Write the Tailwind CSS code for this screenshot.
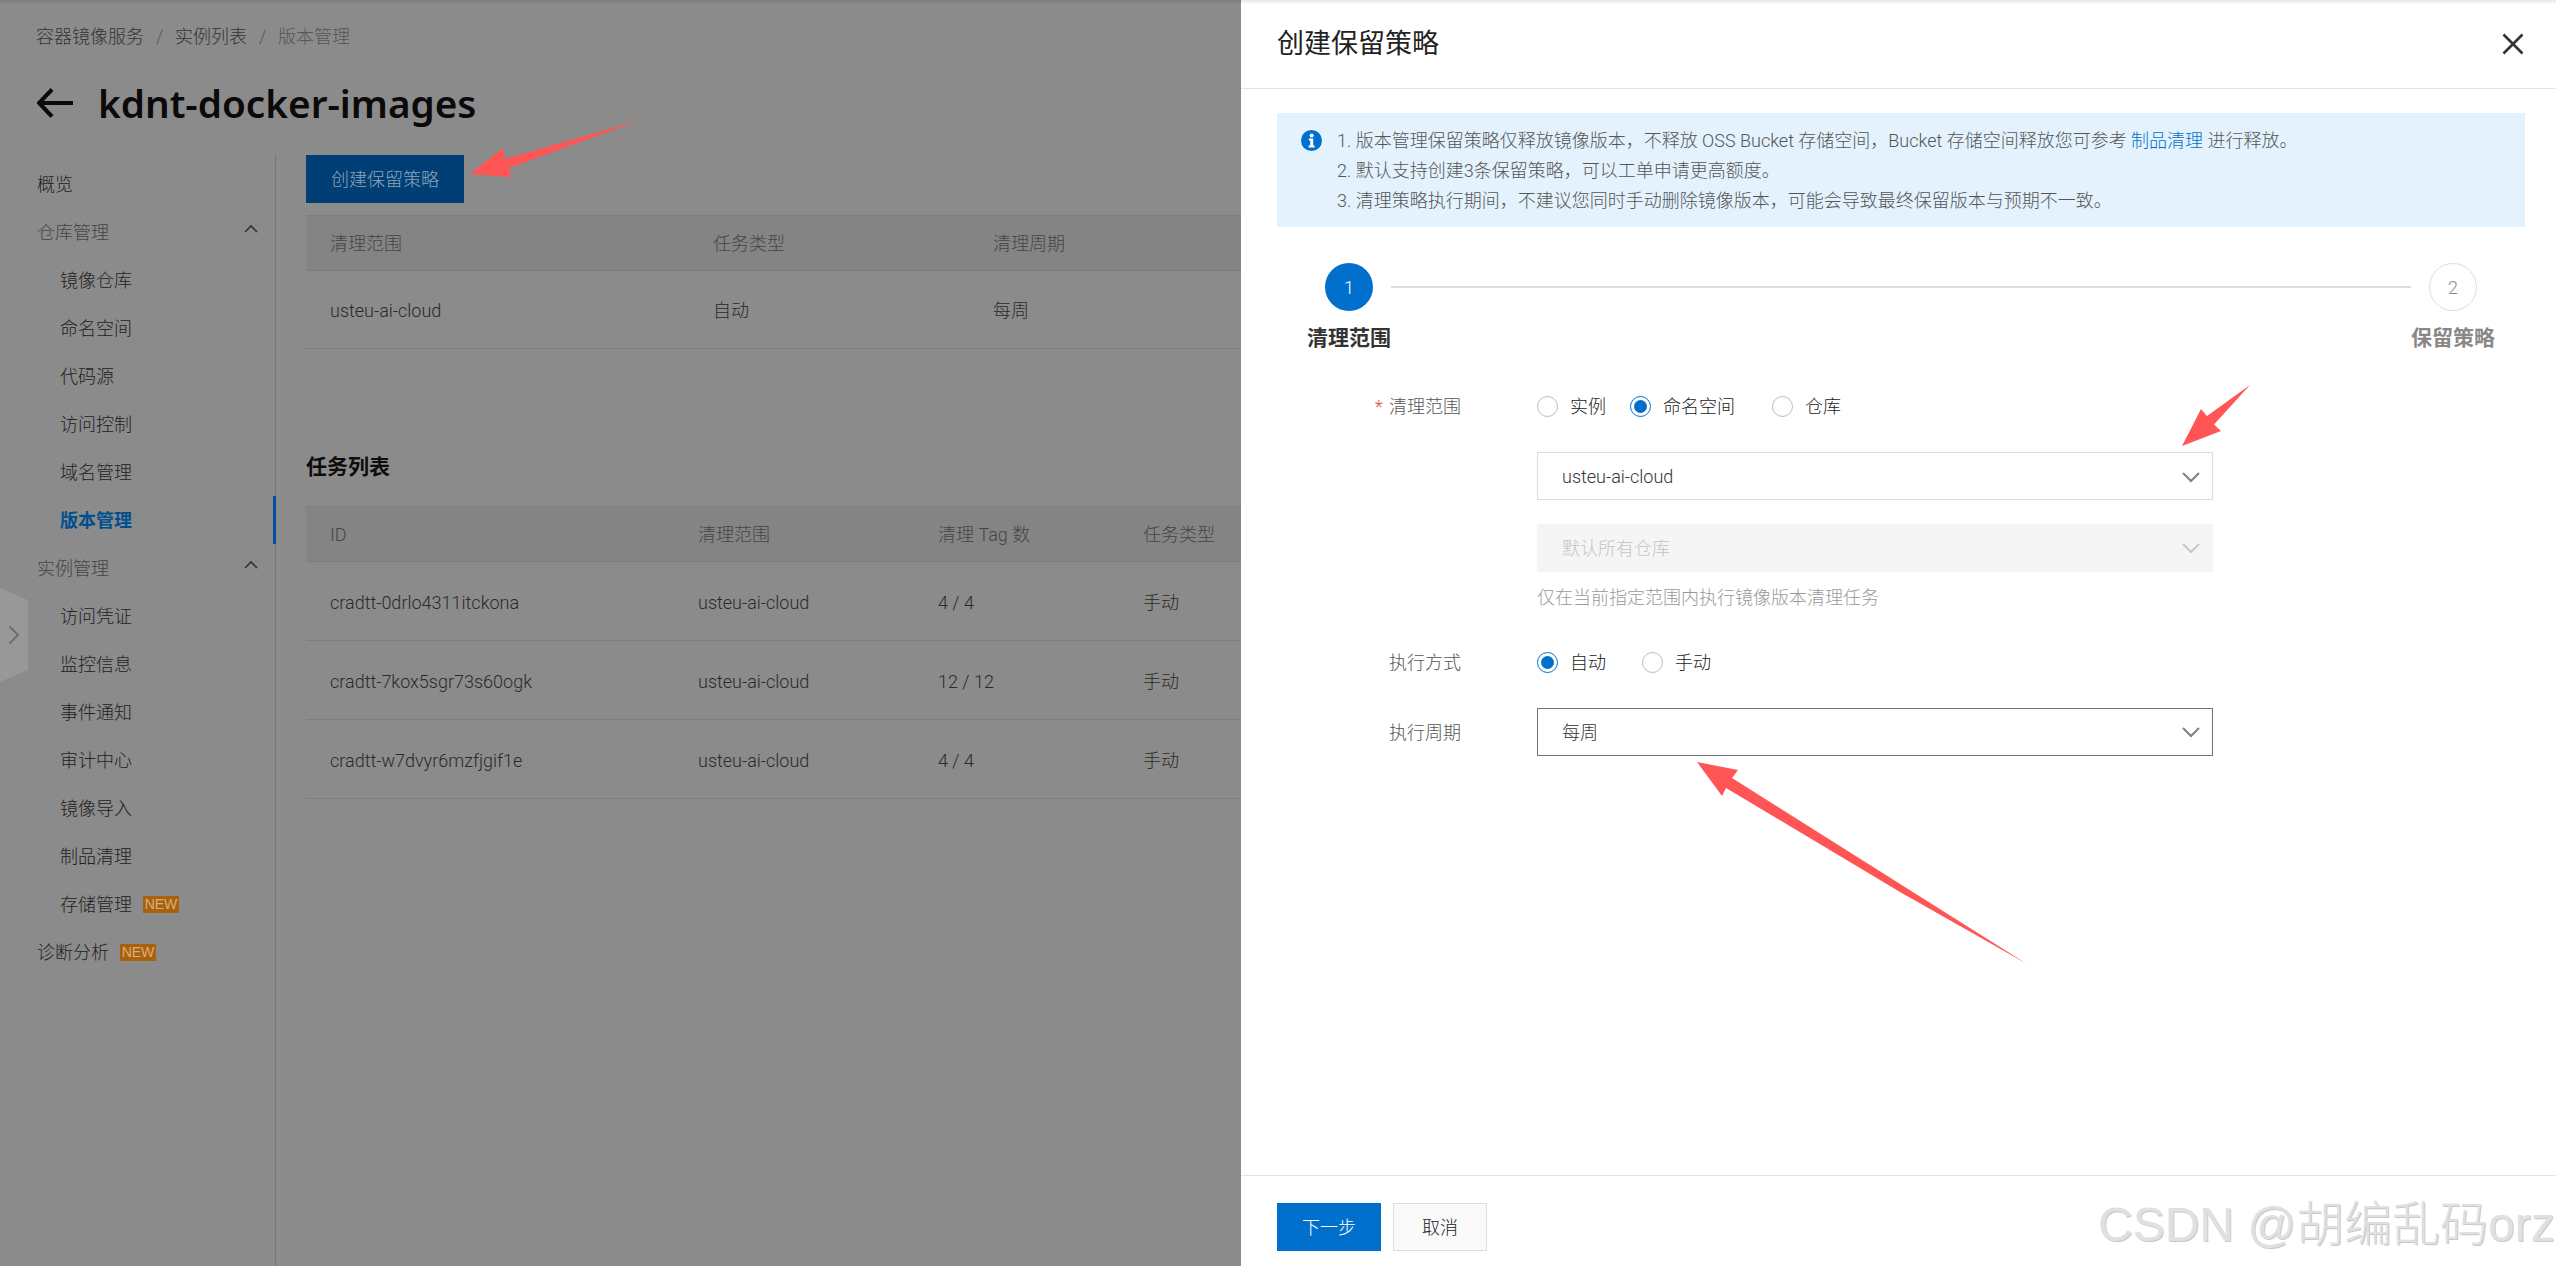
<!DOCTYPE html>
<html lang="zh-CN">
<head>
  <meta charset="UTF-8">
  <title>kdnt-docker-images</title>
  <script src="https://cdn.jsdelivr.net/npm/@tailwindcss/browser@4"></script>
</head>
<body class="relative flex h-screen w-full overflow-hidden bg-white text-[18px] font-['Roboto','Noto_Sans_CJK_SC',sans-serif] font-light">
  <!-- Dimmed page behind the drawer -->
  <div class="flex h-full w-[1241px] shrink-0 flex-col overflow-hidden bg-[#8b8b8b]">
    <div class="flex h-[72px] shrink-0 items-center pl-[36px] text-[#333333]">
      <span>容器镜像服务</span>
      <span class="w-[31px] text-center text-[#555555]">/</span>
      <span>实例列表</span>
      <span class="w-[31px] text-center text-[#555555]">/</span>
      <span class="text-[#555555]">版本管理</span>
    </div>
    <div class="flex h-[62px] shrink-0 items-center pl-[37px] text-[#0a0a0a]">
      <svg class="h-[30px] w-[36px]" viewBox="0 0 36 30" fill="none" stroke="#0a0a0a" stroke-width="4">
        <path d="M1 15H36M15 1.5L2 15l13 13.5"/>
      </svg>
      <h1 class="ml-[25px] text-[38.700px] leading-none font-semibold font-['Noto_Sans',sans-serif]">kdnt-docker-images</h1>
    </div>
    <div class="mt-[21px] flex min-h-0 flex-1">
      <!-- Side menu -->
      <nav class="relative w-[276px] shrink-0 border-r border-[#777777] pt-[5px] text-[#222222]">
        <div class="flex h-[48px] items-center pl-[37px]">概览</div>
        <div class="flex h-[48px] items-center justify-between pr-[17px] pl-[37px] text-[#444444]">
          <span>仓库管理</span>
          <svg class="mb-[6px] h-[10px] w-[14px]" viewBox="0 0 14 10" fill="none" stroke="#333333" stroke-width="1.6"><path d="M1 8l6-6 6 6"/></svg>
        </div>
        <div class="flex h-[48px] items-center pl-[60px]">镜像仓库</div>
        <div class="flex h-[48px] items-center pl-[60px]">命名空间</div>
        <div class="flex h-[48px] items-center pl-[60px]">代码源</div>
        <div class="flex h-[48px] items-center pl-[60px]">访问控制</div>
        <div class="flex h-[48px] items-center pl-[60px]">域名管理</div>
        <div class="relative flex h-[48px] items-center pl-[60px] font-bold text-[#00508f]">
          版本管理
          <span class="absolute top-0 right-[-1px] h-full w-[3px] bg-[#00509b]"></span>
        </div>
        <div class="flex h-[48px] items-center justify-between pr-[17px] pl-[37px] text-[#444444]">
          <span>实例管理</span>
          <svg class="mb-[6px] h-[10px] w-[14px]" viewBox="0 0 14 10" fill="none" stroke="#333333" stroke-width="1.6"><path d="M1 8l6-6 6 6"/></svg>
        </div>
        <div class="flex h-[48px] items-center pl-[60px]">访问凭证</div>
        <div class="flex h-[48px] items-center pl-[60px]">监控信息</div>
        <div class="flex h-[48px] items-center pl-[60px]">事件通知</div>
        <div class="flex h-[48px] items-center pl-[60px]">审计中心</div>
        <div class="flex h-[48px] items-center pl-[60px]">镜像导入</div>
        <div class="flex h-[48px] items-center pl-[60px]">制品清理</div>
        <div class="flex h-[48px] items-center pl-[60px]">
          存储管理
          <span class="ml-[11px] flex h-[17px] w-[36px] items-center justify-center bg-[#a8620f] text-[14px] font-medium text-[#dcae75] font-['Liberation_Sans',sans-serif]">NEW</span>
        </div>
        <div class="flex h-[48px] items-center pl-[37px]">
          诊断分析
          <span class="ml-[11px] flex h-[17px] w-[36px] items-center justify-center bg-[#a8620f] text-[14px] font-medium text-[#dcae75] font-['Liberation_Sans',sans-serif]">NEW</span>
        </div>
      </nav>
      <!-- Policies and tasks -->
      <main class="min-w-0 flex-1 pl-[30px]">
        <button class="flex h-[48px] w-[158px] items-center justify-center bg-[#003f76] text-[#8ea3b6]">创建保留策略</button>
        <div class="mt-[12px] grid h-[56px] grid-cols-[383px_280px_1fr] items-center border-y border-[#7d7d7d] bg-[#848484] pl-[24px] text-[#444444]">
          <span>清理范围</span><span>任务类型</span><span>清理周期</span>
        </div>
        <div class="grid h-[78px] grid-cols-[383px_280px_1fr] items-center border-b border-[#7d7d7d] pt-[2px] pl-[24px] text-[#2a2a2a]">
          <span>usteu-ai-cloud</span><span>自动</span><span>每周</span>
        </div>
        <h2 class="mt-[101px] h-[34px] text-[21px] leading-[34px] font-bold text-[#0d0d0d]">任务列表</h2>
        <div class="mt-[22px] grid h-[56px] grid-cols-[368px_240px_205px_1fr] items-center border-y border-[#7d7d7d] bg-[#848484] pl-[24px] text-[#444444]">
          <span>ID</span><span>清理范围</span><span>清理 Tag 数</span><span>任务类型</span>
        </div>
        <div class="grid h-[79px] grid-cols-[368px_240px_205px_1fr] items-center border-b border-[#7d7d7d] pt-[2px] pl-[24px] text-[#2a2a2a]">
          <span>cradtt-0drlo4311itckona</span><span>usteu-ai-cloud</span><span>4 / 4</span><span>手动</span>
        </div>
        <div class="grid h-[79px] grid-cols-[368px_240px_205px_1fr] items-center border-b border-[#7d7d7d] pt-[2px] pl-[24px] text-[#2a2a2a]">
          <span>cradtt-7kox5sgr73s60ogk</span><span>usteu-ai-cloud</span><span>12 / 12</span><span>手动</span>
        </div>
        <div class="grid h-[79px] grid-cols-[368px_240px_205px_1fr] items-center border-b border-[#7d7d7d] pt-[2px] pl-[24px] text-[#2a2a2a]">
          <span>cradtt-w7dvyr6mzfjgif1e</span><span>usteu-ai-cloud</span><span>4 / 4</span><span>手动</span>
        </div>
      </main>
    </div>
  </div>

  <!-- Drawer -->
  <section class="flex h-full min-w-0 flex-1 flex-col bg-white text-[#333333]">
    <header class="flex h-[89px] shrink-0 items-center justify-between border-b border-[#e3e3e3] pr-[32px] pl-[36px]">
      <h2 class="text-[27px] font-normal text-[#222222]">创建保留策略</h2>
      <svg class="h-[22px] w-[22px]" viewBox="0 0 22 22" fill="none" stroke="#333333" stroke-width="2.6"><path d="M1.5 1.5l19 19M20.5 1.5l-19 19"/></svg>
    </header>
    <div class="min-h-0 flex-1">
      <div class="mt-[24px] mr-[31px] ml-[36px] flex h-[114px] bg-[#e3f2fd] pt-[13px] pl-[24px] leading-[30px] text-[#555555]">
        <svg class="mt-[4px] h-[21px] w-[21px] shrink-0" viewBox="0 0 21 21">
          <circle cx="10.5" cy="10.500" r="10.500" fill="#0070cc"/>
          <circle cx="10.7" cy="5.400" r="2" fill="#ffffff"/>
          <path d="M7.8 8.600h4.400v7h1.400v1.800H7.600v-1.800h1.600v-5.200H7.800z" fill="#ffffff"/>
        </svg>
        <div class="ml-[15px]">
          <p>1. 版本管理保留策略仅释放镜像版本，不释放 OSS Bucket 存储空间，Bucket 存储空间释放您可参考 <a class="text-[#0070cc]">制品清理</a> 进行释放。</p>
          <p>2. 默认支持创建3条保留策略，可以工单申请更高额度。</p>
          <p>3. 清理策略执行期间，不建议您同时手动删除镜像版本，可能会导致最终保留版本与预期不一致。</p>
        </div>
      </div>

      <!-- Steps -->
      <div class="mt-[36px] flex h-[48px] items-center pr-[79px] pl-[84px]">
        <span class="flex h-[48px] w-[48px] shrink-0 items-center justify-center rounded-full bg-[#0070cc] text-white">1</span>
        <span class="mx-[18px] h-[2px] flex-1 bg-[#dddddd]"></span>
        <span class="flex h-[48px] w-[48px] shrink-0 items-center justify-center rounded-full border border-[#dddddd] text-[#888888]">2</span>
      </div>
      <div class="mt-[12px] flex h-[30px] items-center justify-between pr-[61px] pl-[66px] text-[21px] leading-[30px] font-bold">
        <span class="text-[#333333]">清理范围</span>
        <span class="text-[#888888]">保留策略</span>
      </div>

      <!-- Form -->
      <div class="mt-[38px] ml-[134px] flex h-[30px]">
        <label class="flex w-[162px] items-center text-[#555555]"><span class="w-[14px] text-[#e84c3d]">*</span>清理范围</label>
        <div class="flex items-center text-[#222222]">
          <span class="h-[21px] w-[21px] rounded-full border border-[#bbbbbb]"></span>
          <span class="mr-[24px] ml-[12px]">实例</span>
          <span class="flex h-[21px] w-[21px] items-center justify-center rounded-full border border-[#0070cc]"><span class="h-[13px] w-[13px] rounded-full bg-[#0070cc]"></span></span>
          <span class="mr-[37px] ml-[12px]">命名空间</span>
          <span class="h-[21px] w-[21px] rounded-full border border-[#bbbbbb]"></span>
          <span class="ml-[12px]">仓库</span>
        </div>
      </div>
      <div class="mt-[31px] ml-[296px] w-[676px]">
        <div class="flex h-[48px] items-center justify-between border-[1.5px] border-[#dddddd] pt-[1px] pr-[12px] pl-[24px] text-[#333333]">
          <span>usteu-ai-cloud</span>
          <svg class="h-[12px] w-[18px]" viewBox="0 0 18 12" fill="none" stroke="#808080" stroke-width="2"><path d="M1 2l8 8 8-8"/></svg>
        </div>
        <div class="mt-[24px] flex h-[48px] items-center justify-between bg-[#f5f5f5] pr-[13px] pl-[25px] text-[#c4c4c4]">
          <span>默认所有仓库</span>
          <svg class="h-[12px] w-[18px]" viewBox="0 0 18 12" fill="none" stroke="#c8c8c8" stroke-width="2"><path d="M1 2l8 8 8-8"/></svg>
        </div>
        <p class="mt-[11px] h-[30px] leading-[30px] text-[#999999]">仅在当前指定范围内执行镜像版本清理任务</p>
      </div>
      <div class="mt-[34px] ml-[148px] flex h-[30px] w-[824px]">
        <label class="flex w-[148px] items-center text-[#555555]">执行方式</label>
        <div class="flex items-center text-[#222222]">
          <span class="flex h-[21px] w-[21px] items-center justify-center rounded-full border border-[#0070cc]"><span class="h-[13px] w-[13px] rounded-full bg-[#0070cc]"></span></span>
          <span class="mr-[36px] ml-[12px]">自动</span>
          <span class="h-[21px] w-[21px] rounded-full border border-[#bbbbbb]"></span>
          <span class="ml-[12px]">手动</span>
        </div>
      </div>
      <div class="mt-[31px] ml-[148px] flex w-[824px] items-center">
        <label class="w-[148px] text-[#555555]">执行周期</label>
        <div class="flex h-[48px] flex-1 items-center justify-between border-[1.5px] border-[#707070] pr-[12px] pl-[24px] text-[#333333]">
          <span>每周</span>
          <svg class="h-[12px] w-[18px]" viewBox="0 0 18 12" fill="none" stroke="#808080" stroke-width="2"><path d="M1 2l8 8 8-8"/></svg>
        </div>
      </div>
    </div>
    <footer class="flex h-[91px] shrink-0 items-start gap-[12px] border-t border-[#e3e3e3] pt-[27px] pl-[36px]">
      <button class="h-[48px] w-[104px] bg-[#0070cc] text-white">下一步</button>
      <button class="h-[48px] w-[94px] border border-[#dddddd] bg-[#fafafa] text-[#222222]">取消</button>
    </footer>
  </section>

  <!-- Overlays: shadow at the top edge, menu toggle, annotations, watermark -->
  <div class="pointer-events-none absolute inset-x-0 top-0 h-[4px] bg-gradient-to-b from-black/10 to-transparent"></div>
  <div class="absolute top-[588px] left-0 flex h-[94px] w-[28px] items-center justify-center bg-[#989898] [clip-path:polygon(0_0,100%_13%,100%_87%,0_100%)]">
    <svg class="h-[20px] w-[12px]" viewBox="0 0 12 20" fill="none" stroke="#6e6e6e" stroke-width="2"><path d="M1.500 1.500L10 10l-8.500 8.500"/></svg>
  </div>
  <svg class="pointer-events-none absolute inset-0 h-full w-full" viewBox="0 0 2556 1266" fill="#ff5555">
    <path d="M640 120L509 168l2 9-41-3 33-26 2 11z"/>
    <path d="M2250 385l-43 31-6-7-19 37 39-15-7-6.500z"/>
    <path d="M1697 762l41 8-6 8 295 186-127-72-174-104-4 8z"/>
  </svg>
  <div class="pointer-events-none absolute top-[1195px] left-[2098px] text-[48px] leading-[60px] font-light whitespace-nowrap text-[#e0e0e0] [text-shadow:1px_1px_0_#c8c8c8] font-['Liberation_Sans','Noto_Sans_CJK_SC',sans-serif]">CSDN @胡编乱码orz</div>
</body>
</html>
